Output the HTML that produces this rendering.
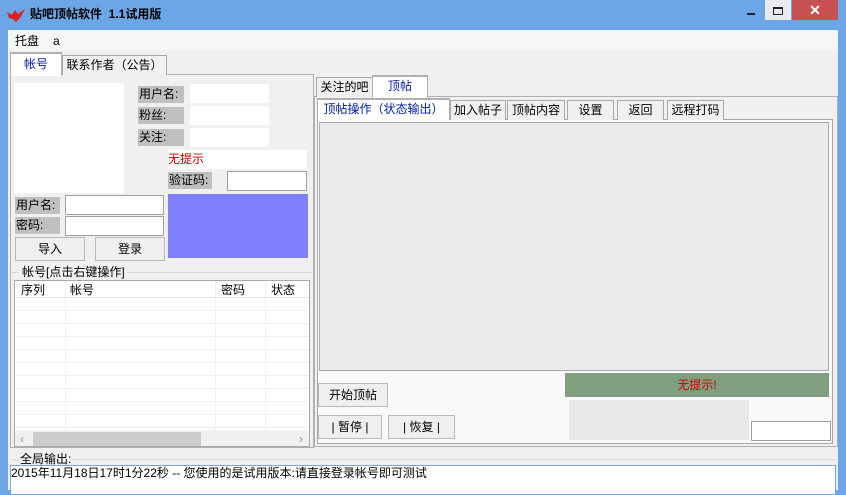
<!DOCTYPE html>
<html><head><meta charset="utf-8"><style>
*{margin:0;padding:0;box-sizing:border-box}
body{width:846px;height:490px;overflow:hidden;background:#6ca6e6;font-family:"Liberation Sans","Noto Sans CJK SC",sans-serif;font-size:12px;color:#000;position:relative}
.a{position:absolute}
.t{position:absolute;white-space:nowrap;line-height:14px}
.lbl{position:absolute;background:#c0c0c0;line-height:17px;padding-left:1px}
.in{position:absolute;background:#fff}
.inb{position:absolute;background:#fff;border:1px solid #a0a0a0}
.btn{position:absolute;background:#efefef;border:1px solid #b8b8b8;text-align:center;line-height:22px}
.tab{position:absolute;background:#f0f0f0;border:1px solid #a8a8a8;border-bottom:none;text-align:center;line-height:19px}
.sel{background:#fff;border-top:2px solid #f0a030;color:#0020a0}
</style></head><body>
<!-- title -->
<svg class="a" style="left:6px;top:6px" width="20" height="18" viewBox="0 0 20 18"><path d="M1 6 L6 9 L9 4 L12 8 L19 3 L14 12 L10 16 L7 13 L3 12 Z" fill="#e02020"/></svg>
<div class="t" style="left:30px;top:7px;font-weight:bold;font-size:12px">贴吧顶帖软件&nbsp; 1.1试用版</div>
<div class="a" style="left:747px;top:13px;width:8px;height:2px;background:#222"></div>
<div class="a" style="left:765px;top:0;width:26px;height:20px;background:#e8eaee"></div>
<div class="a" style="left:773px;top:7px;width:10px;height:8px;border:1px solid #222;border-top-width:2px"></div>
<div class="a" style="left:792px;top:0;width:46px;height:20px;background:#c75050;color:#fff;text-align:center;line-height:20px;font-size:14px;font-weight:bold">✕</div>
<!-- client -->
<div class="a" style="left:8px;top:30px;width:830px;height:460px;background:#f0f0f0"></div>
<div class="a" style="left:8px;top:30px;width:830px;height:20px;background:#f5f6f7"></div>
<div class="t" style="left:15px;top:34px">托盘</div>
<div class="t" style="left:53px;top:34px">a</div>
<!-- left tabs -->
<div class="a" style="left:10px;top:74px;width:304px;height:374px;border:1px solid #b0b0b0"></div>
<div class="tab sel" style="left:10px;top:52px;width:52px;height:24px;border-color:#b0b0b0;line-height:21px">帐号</div>
<div class="tab" style="left:62px;top:55px;width:105px;height:20px">联系作者（公告）</div>
<div class="in" style="left:14px;top:83px;width:110px;height:110px"></div>
<div class="lbl" style="left:138px;top:86px;width:46px">用户名:</div><div class="in" style="left:190px;top:84px;width:79px;height:19px"></div>
<div class="lbl" style="left:138px;top:107px;width:46px">粉丝:</div><div class="in" style="left:190px;top:106px;width:79px;height:19px"></div>
<div class="lbl" style="left:138px;top:129px;width:46px">关注:</div><div class="in" style="left:190px;top:128px;width:79px;height:19px"></div>
<div class="in" style="left:168px;top:150px;width:139px;height:19px"></div>
<div class="t" style="left:168px;top:152px;color:#c00000">无提示</div>
<div class="lbl" style="left:168px;top:172px;width:44px">验证码:</div>
<div class="inb" style="left:227px;top:171px;width:80px;height:20px"></div>
<div class="a" style="left:168px;top:194px;width:140px;height:64px;background:#8080ff"></div>
<div class="lbl" style="left:15px;top:197px;width:45px">用户名:</div><div class="inb" style="left:65px;top:195px;width:99px;height:20px"></div>
<div class="lbl" style="left:15px;top:217px;width:45px">密码:</div><div class="inb" style="left:65px;top:216px;width:99px;height:20px"></div>
<div class="btn" style="left:15px;top:237px;width:70px;height:24px">导入</div>
<div class="btn" style="left:95px;top:237px;width:70px;height:24px">登录</div>
<div class="a" style="left:12px;top:272px;width:300px;height:1px;background:#d8d8d8"></div>
<div class="t" style="left:20px;top:265px;background:#f0f0f0;padding:0 2px">帐号[点击右键操作]</div>
<div class="a" style="left:14px;top:280px;width:296px;height:167px;background:#fff;border:1px solid #a8a8a8;overflow:hidden">
 <div class="a" style="left:0;top:0;width:296px;height:17px;border-bottom:1px solid #e0e8f0"></div>
 <div class="t" style="left:6px;top:2px">序列</div><div class="t" style="left:55px;top:2px">帐号</div><div class="t" style="left:206px;top:2px">密码</div><div class="t" style="left:256px;top:2px">状态</div>
 <div class="a" style="left:50px;top:0;width:1px;height:150px;background:#eef0f2"></div>
 <div class="a" style="left:200px;top:0;width:1px;height:150px;background:#eef0f2"></div>
 <div class="a" style="left:250px;top:0;width:1px;height:150px;background:#eef0f2"></div>
 <div class="a" style="left:0;top:17px;width:296px;height:133px;background:repeating-linear-gradient(to bottom,transparent 0,transparent 12px,#eceef0 12px,#eceef0 13px)"></div>
 <div class="a" style="left:0;top:149px;width:296px;height:17px;background:#f0f0f0"></div>
 <div class="a" style="left:18px;top:151px;width:168px;height:14px;background:#cdcdcd"></div>
 <div class="t" style="left:5px;top:151px;color:#999">‹</div><div class="t" style="left:284px;top:151px;color:#999">›</div>
</div>
<!-- right -->
<div class="a" style="left:314px;top:96px;width:524px;height:351px;border:1px solid #b0b0b0"></div>
<div class="tab" style="left:316px;top:77px;width:57px;height:20px">关注的吧</div>
<div class="tab sel" style="left:372px;top:75px;width:56px;height:23px;border-color:#b0b0b0">顶帖</div>
<div class="a" style="left:317px;top:119px;width:516px;height:325px;background:#f9f9fb;border:1px solid #a8a8a8"></div>
<div class="tab sel" style="left:317px;top:98px;width:133px;height:22px;border-color:#b0b0b0">顶帖操作（状态输出）</div>
<div class="tab" style="left:450px;top:100px;width:56px;height:20px">加入帖子</div>
<div class="tab" style="left:507px;top:100px;width:58px;height:20px">顶帖内容</div>
<div class="tab" style="left:567px;top:100px;width:47px;height:20px">设置</div>
<div class="tab" style="left:617px;top:100px;width:47px;height:20px">返回</div>
<div class="tab" style="left:667px;top:100px;width:57px;height:20px">远程打码</div>
<div class="a" style="left:319px;top:122px;width:510px;height:249px;background:#ebebeb;border:1px solid #a8a8a8"></div>
<div class="a" style="left:565px;top:373px;width:264px;height:24px;background:#7f9f7f;color:#d00000;text-align:center;line-height:24px">无提示!</div>
<div class="btn" style="left:318px;top:383px;width:70px;height:24px">开始顶帖</div>
<div class="btn" style="left:318px;top:415px;width:64px;height:24px">| 暂停 |</div>
<div class="btn" style="left:388px;top:415px;width:67px;height:24px">| 恢复 |</div>
<div class="a" style="left:569px;top:400px;width:180px;height:40px;background:#e8e8e8"></div>
<div class="inb" style="left:751px;top:421px;width:80px;height:20px"></div>
<!-- bottom -->
<div class="a" style="left:12px;top:459px;width:824px;height:1px;background:#d8d8d8"></div>
<div class="t" style="left:18px;top:452px;background:#f0f0f0;padding:0 2px">全局输出:</div>
<div class="a" style="left:10px;top:465px;width:826px;height:30px;background:#fff;border:1px solid #7aa6d6"></div>
<div class="t" style="left:11px;top:466px">2015年11月18日17时1分22秒 -- 您使用的是试用版本:请直接登录帐号即可测试</div>
</body></html>
